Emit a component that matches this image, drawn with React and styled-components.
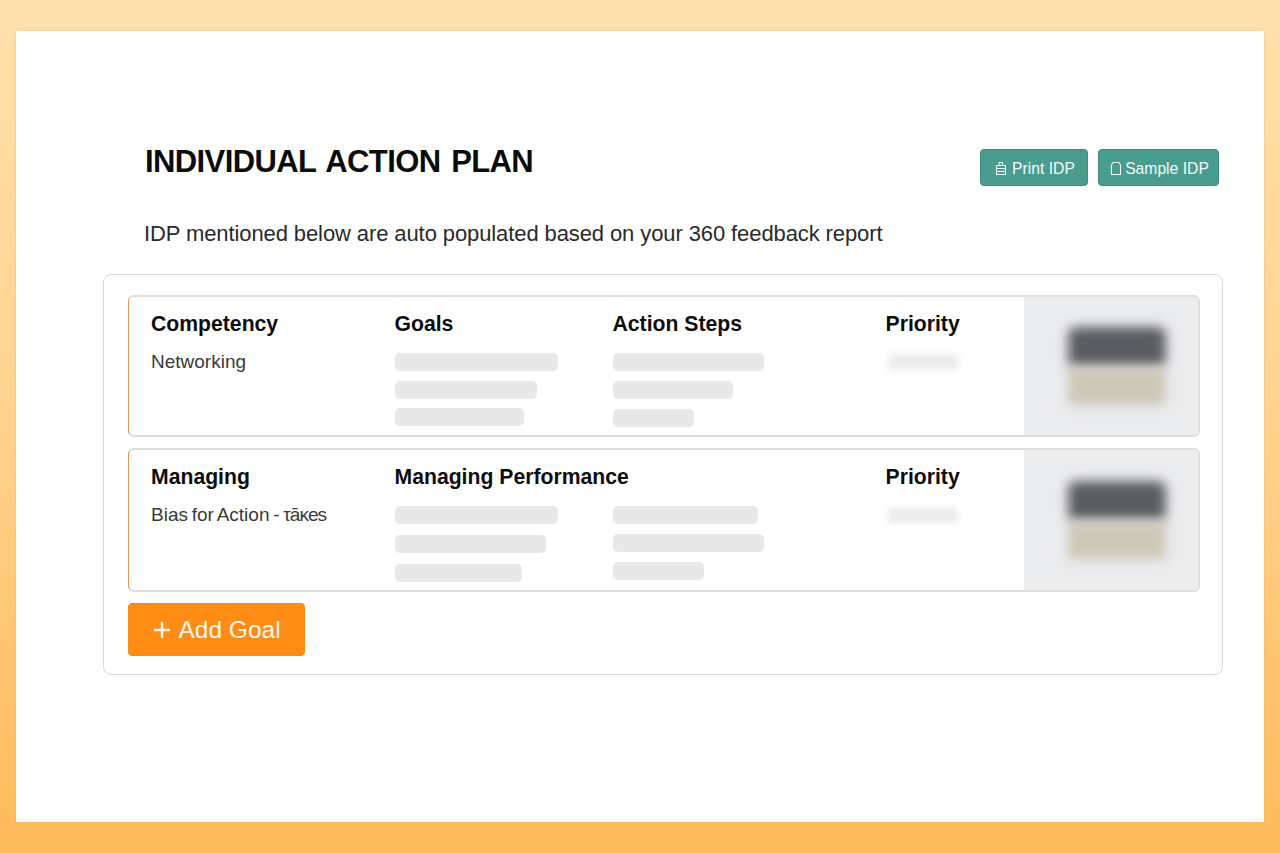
import React from "react";
import styled, { createGlobalStyle } from "styled-components";

const Global = createGlobalStyle`
  html, body { margin: 0; padding: 0; }
  body { font-family: "Liberation Sans", Arial, sans-serif; }
`;

const Page = styled.div`
  box-sizing: border-box;
  height: 853px;
  padding: 31px 16px;
  background: linear-gradient(180deg, #ffe0ac 0%, #ffd591 45%, #ffbb5a 100%);
`;

const Panel = styled.main`
  box-sizing: border-box;
  height: 791px;
  padding: 115px 41px 0 87px;
  background: #ffffff;
  box-shadow: 0 0 2px rgba(200, 160, 100, 0.5);
`;

const Header = styled.header`
  display: flex;
  justify-content: space-between;
  align-items: flex-start;
  padding-left: 42px;
`;

const Title = styled.h1`
  margin: 0;
  font-size: 31px;
  line-height: 32px;
  font-weight: 700;
  letter-spacing: -0.6px;
  word-spacing: 2.6px;
  color: #0c0c0c;
  white-space: nowrap;
`;

const Actions = styled.div`
  display: flex;
  gap: 10px;
  padding-top: 3px;
  margin-right: 4px;
`;

const TealButton = styled.button`
  display: flex;
  align-items: center;
  justify-content: center;
  gap: ${(p) => p.$gap}px;
  box-sizing: border-box;
  width: ${(p) => p.$width}px;
  height: 37px;
  padding: 2px 0 0 2px;
  border: 1px solid #3d8a7c;
  border-radius: 4px;
  background: #499c8e;
  color: #f2fbf8;
  font: 15.7px "Liberation Sans", Arial, sans-serif;
`;

const Subtitle = styled.p`
  margin: 34px 0 26px 41px;
  font-size: 22px;
  line-height: 28px;
  letter-spacing: -0.1px;
  color: #2a2a2a;
  white-space: nowrap;
`;

const Card = styled.section`
  box-sizing: border-box;
  width: 1120px;
  height: 401px;
  padding: 20px 22px 0 24px;
  border: 1px solid #d9d9d9;
  border-radius: 8px;
`;

const GoalRow = styled.article`
  box-sizing: border-box;
  display: grid;
  grid-template-columns: 265.5px 218px 273px 138px 1fr;
  height: ${(p) => p.$height}px;
  margin-bottom: 11px;
  border: 2px solid #dedede;
  border-left: 1.5px solid #f39058;
  border-radius: 6px;
  overflow: hidden;
`;

const Cell = styled.div`
  display: flex;
  flex-direction: column;
  min-width: 0;
  padding-top: 14px;
  padding-left: ${(p) => p.$inset || 0}px;
`;

const WideCell = styled.div`
  grid-column: span 2;
  display: grid;
  grid-template-columns: 218px 273px;
  align-content: start;
  padding-top: 14px;
`;

const Heading = styled.h2`
  margin: 0 0 16px;
  font-size: 21.2px;
  line-height: 26px;
  font-weight: 700;
  color: #0d0d0d;
  white-space: nowrap;
`;

const WideHeading = styled(Heading)`
  grid-column: span 2;
`;

const BodyText = styled.div`
  margin-top: -3px;
  font-size: 19px;
  line-height: 24px;
  color: #3a3a3a;
  white-space: nowrap;
`;

const TightLine = styled(BodyText)`
  word-spacing: -1.5px;
`;

const TightWord = styled.span`
  letter-spacing: -1px;
`;

const Bars = styled.div`
  display: flex;
  flex-direction: column;
  align-items: flex-start;
  gap: ${(p) => p.$gap}px;
`;

const Bar = styled.div`
  height: 18px;
  border-radius: 5px;
  background: #e8e8e8;
`;

const BlurredPriority = styled.div`
  width: 70px;
  height: 16px;
  margin: 1px 0 0 2px;
  border-radius: 4px;
  background: #ececec;
  filter: blur(3px);
`;

const Side = styled.aside`
  display: flex;
  flex-direction: column;
  align-items: center;
  justify-content: center;
  padding-left: 12px;
  background: #ebecee;
`;

const BlurDark = styled.div`
  width: 98px;
  height: 40px;
  border-radius: 8px;
  background: #5b5d62;
  filter: blur(6px);
`;

const BlurTan = styled.div`
  width: 98px;
  height: 38px;
  border-radius: 4px;
  background: #cdc7b7;
  filter: blur(6px);
`;

const AddButton = styled.button`
  display: flex;
  align-items: center;
  justify-content: center;
  gap: 8px;
  box-sizing: border-box;
  width: 177px;
  height: 53px;
  padding: 0 0 0 2px;
  border: 1px solid #f98a12;
  border-radius: 4px;
  background: #ff8c14;
  color: #fff7ee;
  font: 24.5px "Liberation Sans", Arial, sans-serif;
`;

const PrintIcon = () => (
  <svg width="12" height="15" viewBox="0 0 12 15" fill="none" stroke="#f2fbf8" strokeWidth="1">
    <path d="M4 4.5V1.5H7.5V4.5" />
    <rect x="1.5" y="4.5" width="9" height="9" />
    <path d="M1.5 7.5H10.5M1.5 10.5H10.5" />
  </svg>
);

const DocIcon = () => (
  <svg width="12" height="15" viewBox="0 0 12 15" fill="none" stroke="#f2fbf8" strokeWidth="1.1">
    <path d="M3 1.5H9L10.5 4V13.5H1.5V4Z" strokeLinejoin="round" />
  </svg>
);

const PlusIcon = () => (
  <svg width="16" height="16" viewBox="0 0 16 16" stroke="#fff7ee" strokeWidth="2.4">
    <path d="M8 0V16M0 8H16" />
  </svg>
);

const widths = {
  first: { goals: [163, 142, 129], steps: [151, 120, 81] },
  second: { goals: [163, 151, 127], steps: [145, 151, 91] },
};

const BarStack = ({ items, gap }) => (
  <Bars $gap={gap}>
    {items.map((w, i) => (
      <Bar key={i} style={{ width: w }} />
    ))}
  </Bars>
);

const SideBlur = () => (
  <Side>
    <BlurDark />
    <BlurTan />
  </Side>
);

export default function App() {
  return (
    <>
      <Global />
      <Page>
        <Panel>
          <Header>
            <Title>INDIVIDUAL ACTION PLAN</Title>
            <Actions>
              <TealButton $width={108} $gap={5}>
                <PrintIcon />
                Print IDP
              </TealButton>
              <TealButton $width={121} $gap={3}>
                <DocIcon />
                Sample IDP
              </TealButton>
            </Actions>
          </Header>
          <Subtitle>IDP mentioned below are auto populated based on your 360 feedback report</Subtitle>
          <Card>
            <GoalRow $height={142}>
              <Cell $inset={22}>
                <Heading>Competency</Heading>
                <BodyText>Networking</BodyText>
              </Cell>
              <Cell>
                <Heading>Goals</Heading>
                <BarStack items={widths.first.goals} gap={9.5} />
              </Cell>
              <Cell>
                <Heading>Action Steps</Heading>
                <BarStack items={widths.first.steps} gap={10} />
              </Cell>
              <Cell>
                <Heading>Priority</Heading>
                <BlurredPriority />
              </Cell>
              <SideBlur />
            </GoalRow>
            <GoalRow $height={144}>
              <Cell $inset={22}>
                <Heading>Managing</Heading>
                <TightLine>
                  Bias for Action - <TightWord>τāκes</TightWord>
                </TightLine>
              </Cell>
              <WideCell>
                <WideHeading>Managing Performance</WideHeading>
                <BarStack items={widths.second.goals} gap={11} />
                <BarStack items={widths.second.steps} gap={10} />
              </WideCell>
              <Cell>
                <Heading>Priority</Heading>
                <BlurredPriority />
              </Cell>
              <SideBlur />
            </GoalRow>
            <AddButton>
              <PlusIcon />
              Add Goal
            </AddButton>
          </Card>
        </Panel>
      </Page>
    </>
  );
}
